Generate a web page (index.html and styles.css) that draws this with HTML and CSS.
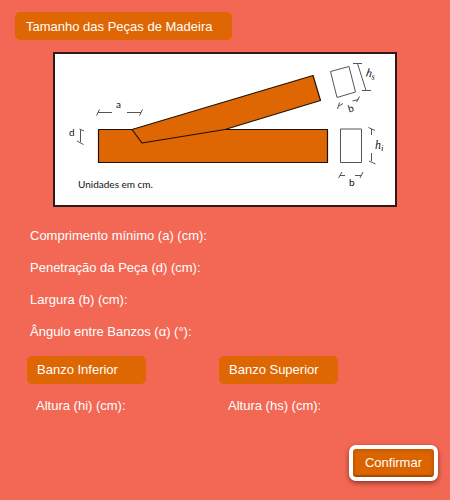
FILE: index.html
```html
<!DOCTYPE html>
<html lang="pt">
<head>
<meta charset="utf-8">
<meta name="viewport" content="width=device-width, initial-scale=1">
<title>Tamanho das Peças de Madeira</title>
<link rel="stylesheet" href="styles.css">
</head>
<body>
<main class="page">
  <h1 class="tag tag-title">Tamanho das Peças de Madeira</h1>

  <figure class="figure">
    <svg class="drawing" viewBox="0 0 340 151">
      <g transform="translate(-55 -54)">
        <g class="wood">
          <path d="M98.500 129.500H327.500V162.500H98.500Z"/>
          <path d="M132 129.500L313 75.500L320.500 100.500L225 129.500L142 143Z"/>
        </g>
        <g class="thin">
          <path d="M340.500 129H361.500V162.500H340.500Z"/>
          <path d="M330.500 71.500L349 66.500L355.500 92L337 97.500Z"/>
          <path d="M98 112.500H112M127 112.500H141M96.500 115.500L99.500 109.500M139.500 115.500L142.500 109.500"/>
          <path d="M80.500 130V142M79.500 129L84 131M77 141L83.500 144.500"/>
          <path d="M353 63.500H362M362 90.500H371M357.500 63.500L366 90.500"/>
          <path d="M337.500 109L339.500 102.500M339 106L343 103.500M352.500 101L358.500 99.500M356.500 102L359.500 96.500"/>
          <path d="M371.500 129V135M371.500 153V161M368.500 127.500L375 130.500M369 161L375.500 164"/>
          <path d="M340 175.500H345M355 175.500H361M338.500 178L342 172M360 178L363 172"/>
        </g>
        <g class="caption">
          <text x="116" y="108">a</text>
          <text x="69" y="136">d</text>
          <text x="349" y="186">b</text>
          <text x="348" y="112" transform="rotate(-15 350 108)">b</text>
          <text x="78" y="188">Unidades em cm.</text>
        </g>
        <g class="math">
          <text x="375" y="149">h<tspan class="sub" dy="2">i</tspan></text>
          <text x="366" y="77" transform="rotate(10 370 74)">h<tspan class="sub" dy="2">s</tspan></text>
        </g>
      </g>
    </svg>
  </figure>

  <section class="fields">
    <p class="field">Comprimento mínimo (a) (cm):</p>
    <p class="field">Penetração da Peça (d) (cm):</p>
    <p class="field">Largura (b) (cm):</p>
    <p class="field">Ângulo entre Banzos (α) (°):</p>
  </section>

  <div class="chords">
    <section class="chord">
      <h2 class="tag">Banzo Inferior</h2>
      <p class="height">Altura (hi) (cm):</p>
    </section>
    <section class="chord">
      <h2 class="tag">Banzo Superior</h2>
      <p class="height">Altura (hs) (cm):</p>
    </section>
  </div>

  <div class="actions">
    <button class="confirm" type="button">Confirmar</button>
  </div>
</main>
</body>
</html>
```
FILE: styles.css
```css
* {
  box-sizing: border-box;
}

body {
  margin: 0;
  background: #f36855;
  color: #fff;
  font: 13px/28px "Liberation Sans", Arial, sans-serif;
}

.page {
  display: flex;
  flex-direction: column;
  padding: 12px 12px 20px 15px;
}

h1,
h2,
p,
figure {
  margin: 0;
}

.tag {
  padding: 0 10px;
  border-radius: 5px;
  background: #df6703;
  font-size: 13px;
  font-weight: normal;
}

.tag-title {
  align-self: flex-start;
  padding: 1px 20px 0 11px;
  line-height: 27px;
}

.figure {
  margin: 12px 41px 0 38px;
  border: 2px solid #2c1a18;
  background: #fff;
}

.drawing {
  display: block;
  width: 100%;
}

.wood {
  fill: #df6703;
  stroke: #1c1208;
  stroke-width: 1.2;
  stroke-linejoin: round;
}

.thin {
  fill: none;
  stroke: #555;
}

.caption {
  fill: #111;
  font: 10px Lato, sans-serif;
}

.math {
  fill: #111;
  font: italic 12px "Liberation Serif", serif;
}

.sub {
  font-size: 9px;
}

.fields {
  padding: 13px 15px 0;
}

.field {
  line-height: 32px;
}

.chords {
  display: grid;
  grid-template-columns: 119px 119px;
  column-gap: 73px;
  padding: 8px 12px 0;
}

.height {
  padding: 8px 0 0 9px;
  white-space: nowrap;
}

.actions {
  display: flex;
  justify-content: flex-end;
  margin-top: 25px;
}

.confirm {
  padding: 0 12px;
  border: 4px solid #fff;
  border-radius: 7px;
  background: #d96400;
  box-shadow: 0 2px 5px rgba(70, 20, 10, 0.6), inset 0 -2px 1px #a94a00, inset 2px 2px 2px #c85a00, inset -2px 0 2px #c85a00;
  color: #fff;
  font: 13px/28px "Liberation Sans", Arial, sans-serif;
}
```
